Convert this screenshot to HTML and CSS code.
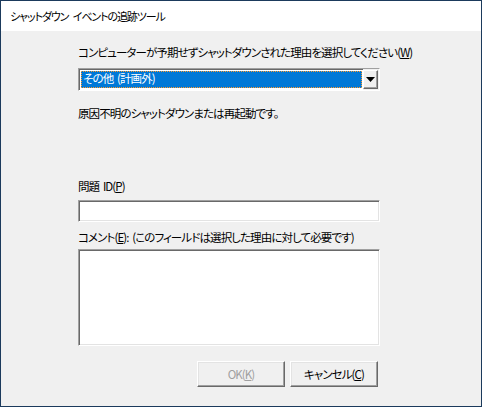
FILE: index.html
```html
<!DOCTYPE html>
<html lang="ja">
<head>
<meta charset="utf-8">
<link rel="stylesheet" href="styles.css">
</head>
<body>
<div class="window">
  <div class="titlebar">シャットダウン イベントの追跡ツール</div>
  <div class="content">
    <div class="label l1">コンピューターが予期せずシャットダウンされた理由を選択してください(<u>W</u>)</div>
    <div class="combo">
      <div class="combo-field"><span class="combo-text">その他 (計画外)</span></div>
      <div class="combo-btn"><svg width="9" height="5" viewBox="0 0 9 5"><path d="M0 0H9L4.5 5Z" fill="#000"/></svg></div>
    </div>
    <div class="label desc">原因不明のシャットダウンまたは再起動です。</div>
    <div class="label idlabel">問題 ID(<u>P</u>)</div>
    <div class="textbox"></div>
    <div class="label clabel">コメント(<u>E</u>): (このフィールドは選択した理由に対して必要です)</div>
    <div class="textbox area"></div>
    <div class="buttons">
      <div class="btn disabled">OK(<u>K</u>)</div>
      <div class="btn">キャンセル(<u>C</u>)</div>
    </div>
  </div>
</div>
</body>
</html>
```
FILE: styles.css
```css
html, body {
  margin: 0;
  padding: 0;
}
body {
  font-family: "Noto Sans CJK JP", "Noto Sans", sans-serif;
  font-size: 11.5px;
  letter-spacing: -0.9px;
  word-spacing: 2px;
  font-feature-settings: "palt";
  color: #000;
  background: #f0f0f0;
}
.window {
  width: 482px;
  height: 407px;
  box-sizing: border-box;
  border: 1px solid #1b3a5c;
  background: #f0f0f0;
  display: flex;
  flex-direction: column;
}
.titlebar {
  height: 30px;
  background: #fff;
  display: flex;
  align-items: center;
  padding-left: 9px;
  font-size: 11px;
  letter-spacing: -1.1px;
  word-spacing: 3px;
  color: #000;
}
.content {
  padding: 13px 0 0 77px;
  width: 302px;
  display: flex;
  flex-direction: column;
}
.label {
  line-height: 16px;
  height: 16px;
  white-space: nowrap;
}
u {
  text-decoration: underline;
  text-underline-offset: 1px;
}
.combo {
  margin-top: 8px;
  height: 23px;
  box-sizing: border-box;
  border-top: 1px solid #a0a0a0;
  border-left: 1px solid #a0a0a0;
  border-right: 1px solid #fff;
  border-bottom: 1px solid #fff;
  display: flex;
}
.combo-field {
  flex: 1;
  display: flex;
  border-top: 1px solid #696969;
  border-left: 1px solid #696969;
  background: #fff;
  padding: 1px 1px 2px 1px;
}
.combo-text {
  flex: 1;
  background: #0078d7;
  color: #fff;
  outline: 1px dotted #ff9a2e;
  outline-offset: -1px;
  line-height: 15px;
  padding-left: 2px;
}
.combo-btn {
  width: 15px;
  box-sizing: border-box;
  background: #f0f0f0;
  border-top: 1px solid #fff;
  border-left: 1px solid #fff;
  border-right: 1px solid #696969;
  border-bottom: 1px solid #696969;
  box-shadow: inset -1px -1px 0 #a0a0a0;
  display: flex;
  align-items: center;
  justify-content: center;
  margin-top: 1px;
  margin-right: 1px;
  margin-bottom: 1px;
}
.desc {
  margin-top: 14px;
}
.idlabel {
  margin-top: 57px;
}
.textbox {
  margin-top: 6px;
  height: 22px;
  box-sizing: border-box;
  background: #fff;
  border-top: 1px solid #a0a0a0;
  border-left: 1px solid #a0a0a0;
  border-right: 1px solid #fff;
  border-bottom: 1px solid #fff;
  box-shadow: inset 1px 1px 0 #696969, inset -1px -1px 0 #e3e3e3;
}
.clabel {
  margin-top: 7px;
}
.area {
  margin-top: 4px;
  height: 97px;
}
.buttons {
  margin-top: 15px;
  display: flex;
  justify-content: flex-end;
  gap: 5px;
  padding-right: 2px;
}
.btn {
  width: 88px;
  height: 26px;
  box-sizing: border-box;
  background: #f0f0f0;
  border-top: 1px solid #fff;
  border-left: 1px solid #fff;
  border-right: 1px solid #696969;
  border-bottom: 1px solid #696969;
  box-shadow: inset -1px -1px 0 #a0a0a0, inset 1px 1px 0 #e3e3e3;
  display: flex;
  align-items: center;
  justify-content: center;
}
.btn.disabled {
  color: #a0a0a0;
}
```
